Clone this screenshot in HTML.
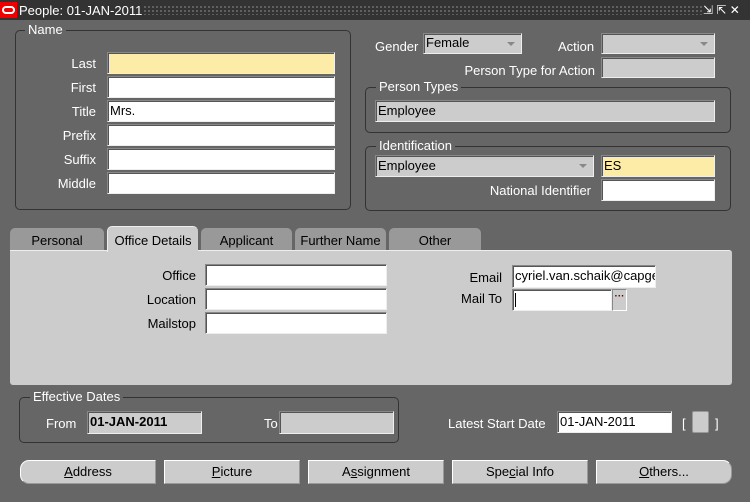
<!DOCTYPE html>
<html><head><style>
*{margin:0;padding:0;box-sizing:border-box}
body{width:750px;height:502px;background:#666;font-family:"Liberation Sans",sans-serif;font-size:13px;position:relative;overflow:hidden}
.a{position:absolute}
.t{position:absolute;color:#fff;white-space:nowrap;line-height:14px}
.d{position:absolute;color:#000;white-space:nowrap;line-height:14px}
.f{position:absolute;background:#fff;border:1px solid #888;border-right-color:#eee;border-bottom-color:#eee;box-shadow:inset 1px 1px 0 #555;padding:3px 2px;line-height:14px;color:#000;overflow:hidden;white-space:nowrap}
.g{background:#ccc}
.y{background:#fdeba8}
.box{position:absolute;border:1px solid #333;border-radius:5px}
.lg{position:absolute;background:#666;color:#fff;padding:0 3px;line-height:14px}
.arr{position:absolute;right:6px;top:8px;width:0;height:0;border-left:4px solid transparent;border-right:4px solid transparent;border-top:4px solid #888}
.tab{position:absolute;top:228px;height:23px;background:#999;border-radius:5px 5px 0 0;text-align:center;line-height:26px;color:#000}
.btn{position:absolute;top:460px;height:24px;width:136px;background:#ccc;border-top:1px solid #fff;border-left:1px solid #fff;border-right:1px solid #999;border-bottom:1px solid #999;text-align:center;line-height:22px;color:#000}
.r{text-align:right}
</style></head><body>
<div class="a" style="left:0;top:0;width:750px;height:20px;background:#333"></div>
<div class="a" style="left:143px;top:5px;width:560px;height:10px;background-image:radial-gradient(#888 0.7px,transparent 0.9px);background-size:4px 4px"></div>
<div class="a" style="left:0;top:2px;width:17px;height:16px;background:#e00"></div>
<div class="a" style="left:2px;top:6px;width:13px;height:8px;border:2px solid #fff;border-radius:4px"></div>
<div class="t" style="left:19px;top:4px">People: 01-JAN-2011</div>
<div class="t" style="left:703px;top:3px;font-size:12px">⇲ ⇱ ✕</div>

<div class="box" style="left:15px;top:30px;width:336px;height:180px"></div>
<div class="lg" style="left:25px;top:23px">Name</div>
<div class="t r" style="left:20px;top:57px;width:76px">Last</div>
<div class="t r" style="left:20px;top:81px;width:76px">First</div>
<div class="t r" style="left:20px;top:105px;width:76px">Title</div>
<div class="t r" style="left:20px;top:129px;width:76px">Prefix</div>
<div class="t r" style="left:20px;top:153px;width:76px">Suffix</div>
<div class="t r" style="left:20px;top:177px;width:76px">Middle</div>
<div class="f y" style="left:107px;top:52px;width:228px;height:22px"></div>
<div class="f" style="left:107px;top:76px;width:228px;height:22px"></div>
<div class="f" style="left:107px;top:100px;width:228px;height:22px">Mrs.</div>
<div class="f" style="left:107px;top:124px;width:228px;height:22px"></div>
<div class="f" style="left:107px;top:148px;width:228px;height:22px"></div>
<div class="f" style="left:107px;top:172px;width:228px;height:22px"></div>

<div class="t" style="left:375px;top:40px">Gender</div>
<div class="f g" style="left:423px;top:33px;width:99px;height:21px;padding-top:2px">Female<div class="arr"></div></div>
<div class="t" style="left:558px;top:40px">Action</div>
<div class="f g" style="left:601px;top:33px;width:114px;height:21px"><div class="arr"></div></div>
<div class="t r" style="left:420px;top:64px;width:175px">Person Type for Action</div>
<div class="f g" style="left:601px;top:57px;width:114px;height:21px"></div>

<div class="box" style="left:365px;top:87px;width:366px;height:46px"></div>
<div class="lg" style="left:376px;top:80px">Person Types</div>
<div class="f g" style="left:375px;top:100px;width:340px;height:22px">Employee</div>

<div class="box" style="left:365px;top:146px;width:366px;height:65px"></div>
<div class="lg" style="left:376px;top:139px">Identification</div>
<div class="f g" style="left:375px;top:155px;width:219px;height:22px;padding-top:3px">Employee<div class="arr"></div></div>
<div class="f y" style="left:601px;top:155px;width:114px;height:22px;padding-top:3px">ES</div>
<div class="t r" style="left:420px;top:184px;width:171px">National Identifier</div>
<div class="f" style="left:601px;top:179px;width:114px;height:22px"></div>

<div class="tab" style="left:10px;width:94px">Personal</div>
<div class="tab" style="left:201px;width:91px">Applicant</div>
<div class="tab" style="left:295px;width:91px">Further Name</div>
<div class="tab" style="left:389px;width:92px">Other</div>
<div class="a" style="left:10px;top:250px;width:722px;height:135px;background:#ccc;border-top:1px solid #eee;border-radius:0 3px 3px 3px"></div>
<div class="tab" style="left:107px;width:91px;top:226px;height:26px;background:#ccc;border-top:1px solid #eee;border-left:1px solid #eee;line-height:28px">Office Details</div>

<div class="d r" style="left:100px;top:269px;width:96px">Office</div>
<div class="d r" style="left:100px;top:293px;width:96px">Location</div>
<div class="d r" style="left:100px;top:317px;width:96px">Mailstop</div>
<div class="f" style="left:205px;top:264px;width:182px;height:22px"></div>
<div class="f" style="left:205px;top:288px;width:182px;height:22px"></div>
<div class="f" style="left:205px;top:312px;width:182px;height:22px"></div>
<div class="d r" style="left:420px;top:271px;width:82px">Email</div>
<div class="d r" style="left:420px;top:292px;width:82px">Mail To</div>
<div class="f" style="left:512px;top:265px;width:144px;height:23px;padding-top:3px">cyriel.van.schaik@capgemini</div>
<div class="f" style="left:512px;top:289px;width:100px;height:22px"><div class="a" style="left:2px;top:3px;width:1px;height:14px;background:#000"></div></div>
<div class="a" style="left:612px;top:289px;width:15px;height:22px;background:#ccc;border:1px solid #888;border-right-color:#fff;border-bottom-color:#fff;color:#600;font-size:10px;text-align:center;line-height:14px;font-weight:bold">···</div>

<div class="box" style="left:19px;top:397px;width:380px;height:46px"></div>
<div class="lg" style="left:30px;top:390px">Effective Dates</div>
<div class="t" style="left:46px;top:417px">From</div>
<div class="f g" style="left:87px;top:411px;width:115px;height:23px;font-weight:bold;padding-top:3px">01-JAN-2011</div>
<div class="t" style="left:264px;top:417px">To</div>
<div class="f g" style="left:279px;top:411px;width:115px;height:23px"></div>
<div class="t" style="left:448px;top:417px">Latest Start Date</div>
<div class="f" style="left:557px;top:411px;width:115px;height:22px">01-JAN-2011</div>
<div class="t" style="left:682px;top:417px">[</div>
<div class="a" style="left:692px;top:411px;width:17px;height:22px;background:#ccc;border:1px solid #999;border-radius:2px"></div>
<div class="t" style="left:715px;top:417px">]</div>

<div class="btn" style="left:20px;border-radius:9px 0 0 9px"><u>A</u>ddress</div>
<div class="btn" style="left:164px"><u>P</u>icture</div>
<div class="btn" style="left:308px">A<u>s</u>signment</div>
<div class="btn" style="left:452px">Spe<u>c</u>ial Info</div>
<div class="btn" style="left:596px;border-radius:0 9px 9px 0"><u>O</u>thers...</div>
</body></html>
